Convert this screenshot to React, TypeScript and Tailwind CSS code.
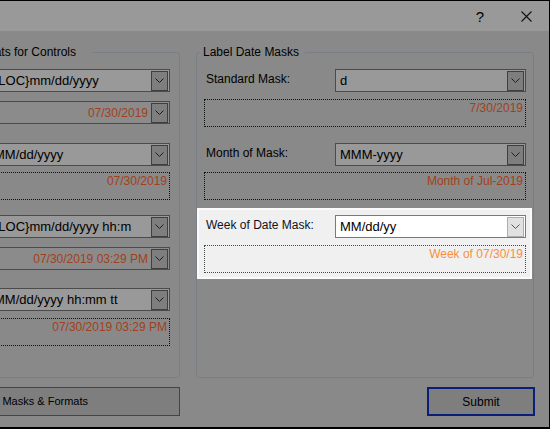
import React from 'react';

const Chevron = ({ color }: { color: string }) => (
  <svg width="9" height="5" viewBox="0 0 9 5" fill="none">
    <path d="M0.5 0.5 L4.5 4.5 L8.5 0.5" stroke={color} strokeWidth="1" />
  </svg>
);

const DropButton = ({ light = false }: { light?: boolean }) => (
  <div
    className={`w-[17px] h-[20px] mr-[1px] shrink-0 flex items-center justify-center border ${
      light ? 'bg-[#e1e1e1] border-[#adadad]' : 'bg-[#7e7e7e] border-[#3f3f3f]'
    }`}
  >
    <Chevron color={light ? '#555555' : '#1e1e1e'} />
  </div>
);

const Combo = ({ text, light = false, className = '' }: { text: string; light?: boolean; className?: string }) => (
  <div
    className={`h-[23px] flex items-center border ${
      light ? 'bg-white border-[#7a7a7a]' : 'bg-[#999999] border-[#4b4b4b]'
    } ${className}`}
  >
    <span className="flex-1 pl-[4px] text-[13px] text-black whitespace-nowrap overflow-hidden">{text}</span>
    <DropButton light={light} />
  </div>
);

const DatePicker = ({ text, className = '' }: { text: string; className?: string }) => (
  <div className={`h-[23px] flex items-center border border-[#4b4b4b] bg-[#8b8b8b] ${className}`}>
    <span className="flex-1 pr-[3px] text-right text-[12px] text-[#a3401a] whitespace-nowrap overflow-hidden">{text}</span>
    <DropButton />
  </div>
);

const Output = ({ text, light = false, className = '' }: { text: string; light?: boolean; className?: string }) => (
  <div
    className={`h-[28px] border border-dotted flex justify-end items-start pt-[1px] pr-[2px] ${
      light ? 'border-[#4a4a4a]' : 'border-[#111111]'
    } ${className}`}
  >
    <span className={`text-[12px] leading-[14px] whitespace-nowrap ${light ? 'text-[#f98f36]' : 'text-[#a3401a]'}`}>
      {text}
    </span>
  </div>
);

export default function App() {
  return (
    <div className="w-[550px] h-[429px] bg-[#898989] border-t border-r border-b-2 border-black flex flex-col overflow-hidden font-['Liberation_Sans',Arial,sans-serif] text-black">
      {/* caption bar */}
      <div className="h-[30px] bg-[#999999] flex justify-end items-center shrink-0">
        <div className="w-[46px] h-[30px] flex items-center justify-center text-[15px] leading-none">?</div>
        <div className="w-[46px] h-[30px] flex items-center justify-center">
          <svg width="11" height="11" viewBox="0 0 11 11">
            <path d="M0.5 0.5 L10.5 10.5 M10.5 0.5 L0.5 10.5" stroke="#111" strokeWidth="1.1" />
          </svg>
        </div>
      </div>

      <div className="flex-1 flex flex-col pt-[14px]">
        <div className="flex gap-[16px]">
          {/* left group, scrolled off to the left */}
          <div className="w-[180px] shrink-0 overflow-hidden">
            <fieldset className="w-[200px] -ml-[20px] h-[333px] border border-[#7a7f87] rounded-[3px] flex flex-col">
              <legend className="w-[111px] flex justify-end pr-[16px] text-[12px] leading-[14px]">
                <span className="shrink-0 whitespace-nowrap">Date Formats for Controls</span>
              </legend>
              <Combo text="{LOC}mm/dd/yyyy" className="mt-[10px] ml-[8px] w-[181px]" />
              <DatePicker text="07/30/2019" className="mt-[9px] ml-[8px] w-[181px]" />
              <Combo text="MM/dd/yyyy" className="mt-[19px] ml-[8px] w-[181px]" />
              <Output text="07/30/2019" className="mt-[6px] ml-[8px] w-[181px]" />
              <Combo text="{LOC}mm/dd/yyyy hh:m" className="mt-[15px] ml-[8px] w-[181px]" />
              <DatePicker text="07/30/2019 03:29 PM" className="mt-[9px] ml-[8px] w-[181px]" />
              <Combo text="MM/dd/yyyy hh:mm tt" className="mt-[18px] ml-[8px] w-[181px]" />
              <Output text="07/30/2019 03:29 PM" className="mt-[7px] ml-[8px] w-[181px]" />
            </fieldset>
          </div>

          {/* right group */}
          <fieldset className="w-[338px] h-[333px] border border-[#7a7f87] rounded-[3px] flex flex-col">
            <legend className="ml-[3px] pl-[3px] pr-[6px] text-[12px] leading-[14px] whitespace-nowrap">
              Label Date Masks
            </legend>
            <div className="mt-[10px] flex items-start">
              <span className="w-[138px] pl-[9px] pt-[3px] text-[12px] leading-[14px]">Standard Mask:</span>
              <Combo text="d" className="w-[191px]" />
            </div>
            <Output text="7/30/2019" className="mt-[7px] ml-[7px] w-[322px]" />
            <div className="mt-[16px] flex items-start">
              <span className="w-[138px] pl-[9px] pt-[3px] text-[12px] leading-[14px]">Month of Mask:</span>
              <Combo text="MMM-yyyy" className="w-[191px]" />
            </div>
            <Output text="Month of Jul-2019" className="mt-[6px] ml-[7px] w-[322px]" />

            {/* focused row */}
            <div className="mt-[8px] w-[335px] border-2 border-[#fbfbfb] bg-[#f0f0f0] pt-[5px] pb-[4px] flex flex-col">
              <div className="flex items-start">
                <span className="w-[136px] pl-[7px] pt-[3px] text-[12px] leading-[14px] text-[#111122]">
                  Week of Date Mask:
                </span>
                <Combo text="MM/dd/yy" light className="w-[191px]" />
              </div>
              <Output text="Week of 07/30/19" light className="mt-[7px] ml-[5px] w-[322px]" />
            </div>
          </fieldset>
        </div>

        <div className="mt-[9px] flex">
          <div className="w-[180px] shrink-0 overflow-hidden">
            <div className="w-[200px] -ml-[20px] h-[29px] border border-[#444444] bg-[#7e7e7e] flex items-center justify-end pr-[91px] text-[11px] whitespace-nowrap">
              Date Masks &amp; Formats
            </div>
          </div>
          <div className="ml-[247px] w-[108px] h-[29px] border-2 border-[#0a1f7a] bg-[#7e7e7e] flex items-center justify-center text-[12px]">
            Submit
          </div>
        </div>
      </div>
    </div>
  );
}
